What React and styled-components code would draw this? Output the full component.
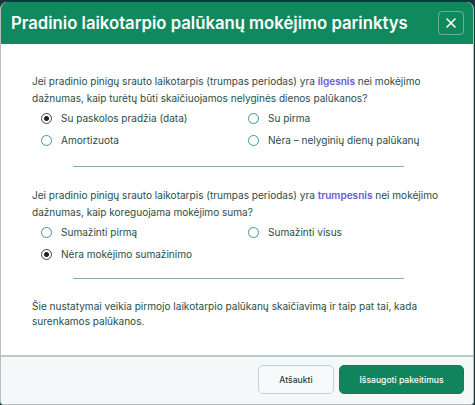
import React, { useState } from "react";
import styled, { createGlobalStyle } from "styled-components";

const Global = createGlobalStyle`
  html, body {
    margin: 0;
    padding: 0;
    background: #17353d;
    font-family: Inter, "Noto Sans", sans-serif;
  }
  * { box-sizing: border-box; }
`;

const Modal = styled.div`
  margin-top: 2px;
  width: 474px;
  height: 403px;
  background: #fff;
  border: 1px solid #b9bebd;
  border-top: 0;
  border-radius: 7px 7px 4px 4px;
  overflow: hidden;
  display: flex;
  flex-direction: column;
`;

const Header = styled.div`
  height: 42px;
  background: #10895e;
  display: flex;
  align-items: center;
  justify-content: space-between;
  padding: 0 9px 0 10px;
  flex-shrink: 0;
`;

const Title = styled.h2`
  margin: 0;
  color: #fff;
  font-size: 16.7px;
  font-weight: 600;
`;

const CloseButton = styled.button`
  width: 26px;
  height: 24px;
  border: 1px solid rgba(255, 255, 255, 0.35);
  border-radius: 4px;
  background: transparent;
  color: #fff;
  display: flex;
  align-items: center;
  justify-content: center;
  padding: 0;
  cursor: pointer;
`;

const Body = styled.div`
  flex: 1;
  min-height: 0;
  padding: 29px 20px 0 31px;
`;

const Question = styled.p`
  margin: 0;
  font-size: 10.05px;
  line-height: 17px;
  color: #2b4d46;
`;

const Highlight = styled.span`
  color: #6a58d8;
  font-weight: 600;
`;

const Options = styled.div`
  display: grid;
  grid-template-columns: 207px 1fr;
  row-gap: 6px;
  margin: 3px 0 0 9px;
`;

const Option = styled.label`
  display: flex;
  align-items: center;
  gap: 9px;
  height: 16px;
  font-size: 10.05px;
  color: #2b4d46;
  white-space: nowrap;
  cursor: pointer;
`;

const Radio = styled.span`
  width: 11px;
  height: 11px;
  border-radius: 50%;
  border: 1px solid ${(p) => (p.checked ? "#3b4a47" : "#3e9b7f")};
  display: flex;
  align-items: center;
  justify-content: center;
  flex-shrink: 0;
  &::after {
    content: "";
    width: 5px;
    height: 5px;
    border-radius: 50%;
    background: #1c2523;
    display: ${(p) => (p.checked ? "block" : "none")};
  }
`;

const Divider = styled.hr`
  margin: ${(p) => p.top}px 0 20px 41px;
  border: 0;
  border-top: 1px solid #84ab9f;
  width: 331px;
`;

const Note = styled.p`
  margin: 2px 0 0;
  font-size: 10.05px;
  line-height: 15px;
  color: #2b4d46;
`;

const Footer = styled.div`
  height: 49px;
  flex-shrink: 0;
  background: #f4f8f9;
  border-top: 2px solid #b9cbc7;
  display: flex;
  justify-content: flex-end;
  align-items: center;
  gap: 5px;
  padding: 0 9px 2px 0;
`;

const Button = styled.button`
  height: 29px;
  border-radius: 5px;
  font-family: inherit;
  font-size: 8.6px;
  font-weight: 500;
  cursor: pointer;
  padding: 0;
  white-space: nowrap;
  width: ${(p) => p.w}px;
  border: 1px solid ${(p) => (p.primary ? "#0e8159" : "#c3d2d0")};
  background: ${(p) => (p.primary ? "#10855d" : "#f7fafa")};
  color: ${(p) => (p.primary ? "#fff" : "#2a3e3a")};
`;

function RadioOption({ label, checked, onSelect }) {
  return (
    <Option onClick={onSelect}>
      <Radio checked={checked} />
      {label}
    </Option>
  );
}

export default function App() {
  const [longer, setLonger] = useState("start");
  const [shorter, setShorter] = useState("none");

  const longerOptions = [
    ["start", "Su paskolos pradžia (data)"],
    ["first", "Su pirma"],
    ["amort", "Amortizuota"],
    ["noodd", "Nėra – nelyginių dienų palūkanų"],
  ];
  const shorterOptions = [
    ["first", "Sumažinti pirmą"],
    ["all", "Sumažinti visus"],
    ["none", "Nėra mokėjimo sumažinimo"],
  ];

  return (
    <>
      <Global />
      <Modal>
        <Header>
          <Title>Pradinio laikotarpio palūkanų mokėjimo parinktys</Title>
          <CloseButton aria-label="Uždaryti">
            <svg width="12" height="12" viewBox="0 0 12 12">
              <path d="M2 2L10 10M10 2L2 10" stroke="#fff" strokeWidth="1.6" strokeLinecap="round" />
            </svg>
          </CloseButton>
        </Header>
        <Body>
          <Question>
            Jei pradinio pinigų srauto laikotarpis (trumpas periodas) yra{" "}
            <Highlight>ilgesnis</Highlight> nei mokėjimo
            <br />
            dažnumas, kaip turėtų būti skaičiuojamos nelyginės dienos palūkanos?
          </Question>
          <Options>
            {longerOptions.map(([key, label]) => (
              <RadioOption
                key={key}
                label={label}
                checked={longer === key}
                onSelect={() => setLonger(key)}
              />
            ))}
          </Options>
          <Divider top={18} />
          <Question>
            Jei pradinio pinigų srauto laikotarpis (trumpas periodas) yra{" "}
            <Highlight>trumpesnis</Highlight> nei mokėjimo
            <br />
            dažnumas, kaip koreguojama mokėjimo suma?
          </Question>
          <Options>
            {shorterOptions.map(([key, label]) => (
              <RadioOption
                key={key}
                label={label}
                checked={shorter === key}
                onSelect={() => setShorter(key)}
              />
            ))}
          </Options>
          <Divider top={16} />
          <Note>
            Šie nustatymai veikia pirmojo laikotarpio palūkanų skaičiavimą ir
            taip pat tai, kada
            <br />
            surenkamos palūkanos.
          </Note>
        </Body>
        <Footer>
          <Button w={76}>Atšaukti</Button>
          <Button primary w={125}>Išsaugoti pakeitimus</Button>
        </Footer>
      </Modal>
    </>
  );
}
